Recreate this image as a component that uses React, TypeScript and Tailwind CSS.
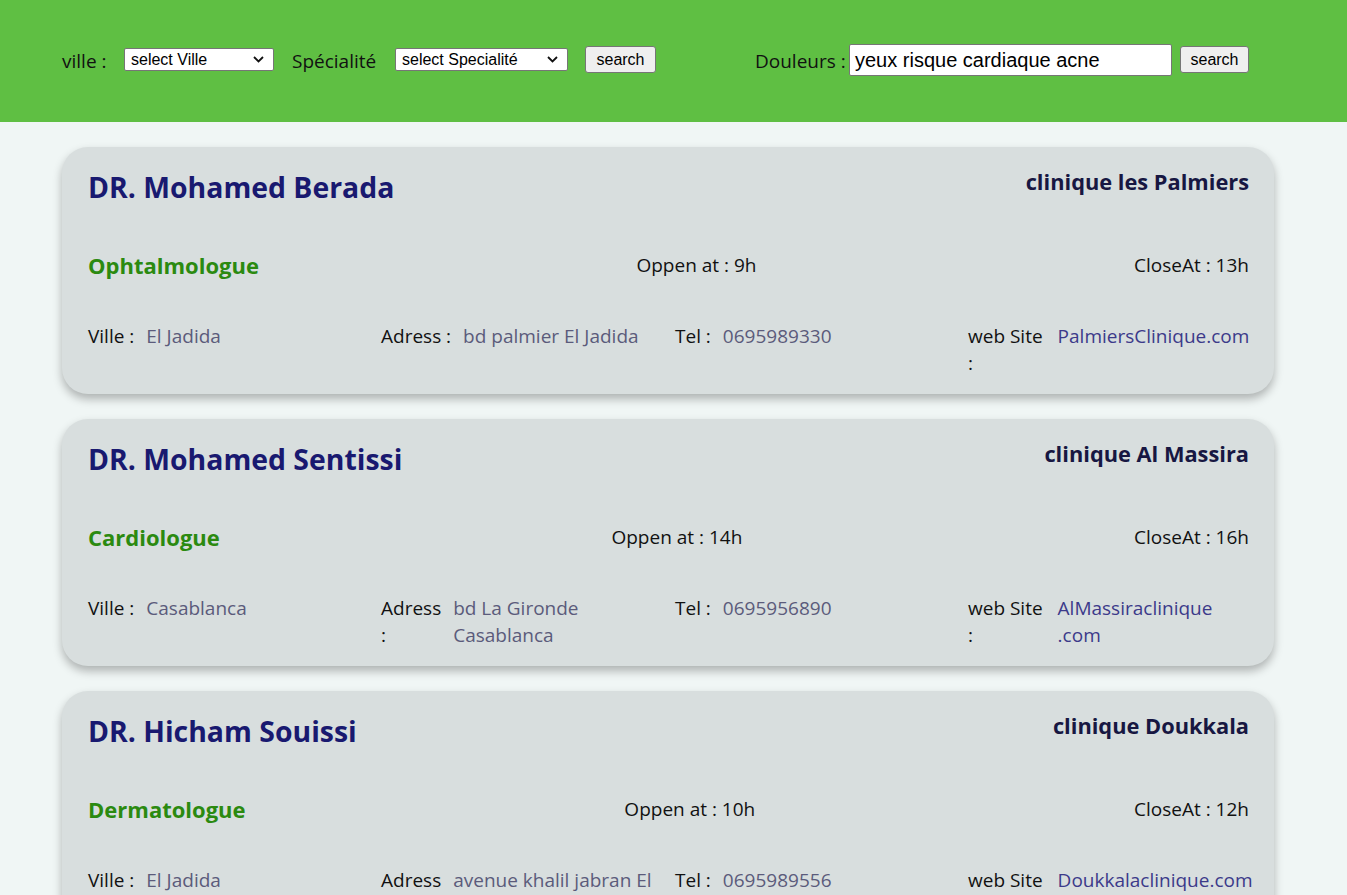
import React from "react";

type Doc = {
  name: string;
  clinic: string;
  spec: string;
  open: string;
  close: string;
  ville: string;
  adressWrap: boolean;
  adress: React.ReactNode;
  tel: string;
  site: React.ReactNode;
};

const docs: Doc[] = [
  {
    name: "DR. Mohamed Berada",
    clinic: "clinique les Palmiers",
    spec: "Ophtalmologue",
    open: "9h",
    close: "13h",
    ville: "El Jadida",
    adressWrap: false,
    adress: "bd palmier El Jadida",
    tel: "0695989330",
    site: "PalmiersClinique.com",
  },
  {
    name: "DR. Mohamed Sentissi",
    clinic: "clinique Al Massira",
    spec: "Cardiologue",
    open: "14h",
    close: "16h",
    ville: "Casablanca",
    adressWrap: true,
    adress: (
      <>
        bd La Gironde
        <br />
        Casablanca
      </>
    ),
    tel: "0695956890",
    site: (
      <>
        AlMassiraclinique
        <br />
        .com
      </>
    ),
  },
  {
    name: "DR. Hicham Souissi",
    clinic: "clinique Doukkala",
    spec: "Dermatologue",
    open: "10h",
    close: "12h",
    ville: "El Jadida",
    adressWrap: true,
    adress: (
      <>
        avenue khalil jabran El
        <br />
        Jadida
      </>
    ),
    tel: "0695989556",
    site: "Doukkalaclinique.com",
  },
];

function Chevron() {
  return (
    <svg width="11" height="7" viewBox="0 0 11 7" className="shrink-0">
      <path d="M1 1l4.5 4.5L10 1" fill="none" stroke="#111" strokeWidth="1.8" />
    </svg>
  );
}

function FakeSelect({ label, w }: { label: string; w: string }) {
  return (
    <div
      className={`${w} h-[23px] bg-white border border-[#767676] rounded-[2px] flex items-center justify-between pl-[6px] pr-[9px] text-[16px] leading-none text-black`}
      style={{ fontFamily: '"Liberation Sans", Arial, sans-serif' }}
    >
      <span>{label}</span>
      <Chevron />
    </div>
  );
}

function Btn({ w }: { w: string }) {
  return (
    <button
      className={`${w} h-[27px] bg-[#efefef] border border-[#767676] rounded-[3px] text-[16px] leading-none text-black flex items-center justify-center`}
      style={{ fontFamily: '"Liberation Sans", Arial, sans-serif' }}
    >
      search
    </button>
  );
}

function Card({ d }: { d: Doc }) {
  return (
    <div className="w-[1212px] bg-[#d8dede] rounded-[26px] shadow-[0_5px_10px_rgba(0,0,0,0.28)] pt-[20px] pb-[16px] pl-[26px] pr-[25px]">
      <div className="flex justify-between items-start">
        <div className="text-[28.4px] leading-[40px] font-bold text-[#191970]">{d.name}</div>
        <div className="text-[21.8px] leading-[28px] font-bold text-[#171742] mt-[1px]">{d.clinic}</div>
      </div>
      <div className="mt-[42px] flex justify-between items-center h-[32px]">
        <div className="text-[22px] leading-[32px] font-bold text-[#2b8a10]">{d.spec}</div>
        <div className="text-[19px] leading-[27px] text-[#111]">Oppen at : {d.open}</div>
        <div className="text-[19px] leading-[27px] text-[#111]">CloseAt : {d.close}</div>
      </div>
      <div className="mt-[42px] grid grid-cols-[293px_294px_293px_1fr] text-[19px] leading-[27px] h-[55px]">
        <div className="flex gap-3">
          <span className="text-[#111] whitespace-nowrap">Ville :</span>
          <span className="text-[#5b5b7b] whitespace-nowrap">{d.ville}</span>
        </div>
        <div className="flex gap-3">
          <span className="text-[#111] whitespace-nowrap">
            {d.adressWrap ? (
              <>
                Adress
                <br />:
              </>
            ) : (
              "Adress :"
            )}
          </span>
          <span className="text-[#5b5b7b] whitespace-nowrap">{d.adress}</span>
        </div>
        <div className="flex gap-3">
          <span className="text-[#111] whitespace-nowrap">Tel :</span>
          <span className="text-[#5b5b7b] whitespace-nowrap">{d.tel}</span>
        </div>
        <div className="flex gap-[15px]">
          <span className="text-[#111] whitespace-nowrap">
            web Site
            <br />:
          </span>
          <span className="text-[#3c3a8a] whitespace-nowrap">{d.site}</span>
        </div>
      </div>
    </div>
  );
}

export default function App() {
  return (
    <div
      className="min-h-[895px] bg-[#f0f6f5] text-[#111]"
      style={{ fontFamily: '"Open Sans", "Noto Sans", sans-serif' }}
    >
      <div className="h-[122px] bg-[#5fbf43] flex items-center pl-[62px] pb-[3px]">
        <div className="flex items-center">
          <span className="w-[45px] whitespace-nowrap text-[19px] text-[#111] mt-[3px]">ville :</span>
          <div className="ml-[17px]">
            <FakeSelect label="select Ville" w="w-[150px]" />
          </div>
          <span className="ml-[18px] w-[84px] whitespace-nowrap text-[19px] text-[#111] mt-[3px]">Spécialité</span>
          <div className="ml-[19px]">
            <FakeSelect label="select Specialité" w="w-[173px]" />
          </div>
          <div className="ml-[17px]">
            <Btn w="w-[71px]" />
          </div>
        </div>
        <div className="flex items-center ml-[99px]">
          <span className="w-[89px] whitespace-nowrap text-[19px] text-[#111] mt-[3px]">Douleurs :</span>
          <div
            className="ml-[5px] w-[323px] h-[32px] bg-white border border-[#767676] rounded-[2px] flex items-center pl-[5px] text-[20px] text-black"
            style={{ fontFamily: '"Liberation Sans", Arial, sans-serif' }}
          >
            yeux risque cardiaque acne
          </div>
          <div className="ml-[8px]">
            <Btn w="w-[69px]" />
          </div>
        </div>
      </div>
      <div className="flex flex-col items-start gap-[25px] pt-[25px] pb-[25px] pl-[62px]">
        {docs.map((d) => (
          <Card key={d.name} d={d} />
        ))}
      </div>
    </div>
  );
}
